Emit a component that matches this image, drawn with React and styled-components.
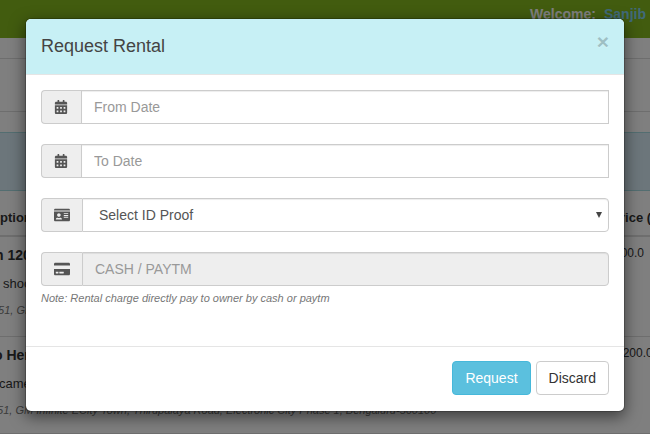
import React from "react";
import styled, { createGlobalStyle } from "styled-components";
import { FaCalendarAlt, FaIdCard, FaCreditCard } from "react-icons/fa";

const GlobalStyle = createGlobalStyle`
  *, *::before, *::after { box-sizing: border-box; }
  body {
    margin: 0;
    overflow: hidden;
    font: 14px/20px "Liberation Sans", Arial, sans-serif;
    color: #333;
  }
`;

const Screen = styled.div`
  position: relative;
  width: 650px;
  height: 434px;
  overflow: hidden;
  background: #fff;
`;

const Page = styled.div`
  display: flex;
  flex-direction: column;
  white-space: nowrap;
`;

const TopBar = styled.header`
  display: flex;
  justify-content: flex-end;
  gap: 8px;
  height: 38px;
  padding: 4px 4px 0 0;
  background: #84b81e;
  color: #fff;
  font-weight: bold;
`;

const UserName = styled.span`
  color: #80d4f4;
`;

const NavStrip = styled.div`
  height: 54px;
  margin-top: 20px;
  border: solid #ddd;
  border-width: 1px 0;
`;

const InfoPanel = styled.div`
  height: 59px;
  margin-top: 20px;
  background: #d9edf7;
  border: solid #a6dce2;
  border-width: 1px 0;
`;

const TableRow = styled.div`
  display: grid;
  grid-template-columns: 617px 1fr;
  height: ${(p) => p.$height}px;
  padding-top: ${(p) => p.$top}px;
  border-bottom: ${(p) => p.$line || 1}px solid #ddd;
  font-weight: ${(p) => (p.$head ? "bold" : "normal")};
  font-size: 13px;
`;

const HeadCell = styled.span`
  padding-left: ${(p) => p.$indent || 0}px;
`;

const Product = styled.div`
  display: flex;
  flex-direction: column;
  margin-left: ${(p) => p.$shift}px;
`;

const Name = styled.strong`
  font-size: 14px;
  line-height: 20px;
`;

const Detail = styled.span`
  margin-top: 9px;
  margin-left: ${(p) => p.$indent}px;
  font-size: 13px;
  line-height: 20px;
`;

const Address = styled.em`
  margin-top: 6px;
  margin-left: -3px;
  font-size: 11px;
  color: #777;
`;

const Price = styled.span`
  margin-top: -2px;
  margin-left: ${(p) => p.$shift}px;
  font-size: 12px;
`;

const Backdrop = styled.div`
  position: absolute;
  inset: 0;
  padding: 18px 25px;
  background: rgba(0, 0, 0, 0.5);
`;

const Dialog = styled.section`
  width: 600px;
  height: 394px;
  display: flex;
  flex-direction: column;
  overflow: hidden;
  background: #fff;
  background-clip: padding-box;
  border: 1px solid rgba(0, 0, 0, 0.2);
  border-radius: 6px;
  box-shadow: 0 5px 15px rgba(0, 0, 0, 0.5);
`;

const DialogHeader = styled.header`
  display: flex;
  justify-content: space-between;
  height: 56px;
  padding: 15px;
  background: #c7f0f5;
  border-bottom: 1px solid #e5e5e5;
`;

const Title = styled.h4`
  margin: 0;
  font-size: 18px;
  font-weight: 400;
  line-height: 25px;
  color: #444;
`;

const Close = styled.button`
  align-self: flex-start;
  margin: -3px 0 0;
  padding: 0;
  border: 0;
  background: none;
  font: bold 21px/21px "Liberation Sans", Arial, sans-serif;
  color: #000;
  opacity: 0.2;
  text-shadow: 0 1px 0 #fff;
`;

const DialogBody = styled.div`
  flex: 1;
  padding: 15px;
`;

const Field = styled.div`
  display: flex;
  height: 34px;
  margin-bottom: ${(p) => (p.$last ? 5 : 20)}px;
`;

const Addon = styled.span`
  display: flex;
  align-items: center;
  justify-content: center;
  width: ${(p) => (p.$wide ? 41 : 40)}px;
  padding-right: ${(p) => (p.$wide ? 0 : 1)}px;
  border: 1px solid #ccc;
  border-right: 0;
  border-radius: 4px 0 0 4px;
  background: #eee;
  color: #555;
  font-size: 14px;
`;

const inputLook = `
  flex: 1;
  min-width: 0;
  margin: 0;
  border: 1px solid #ccc;
  font: 14px/20px "Liberation Sans", Arial, sans-serif;
  box-shadow: inset 0 1px 1px rgba(0, 0, 0, 0.075);
  outline: 0;
`;

const Input = styled.input`
  ${inputLook}
  padding: 6px 12px;
  border-radius: ${(p) => (p.disabled ? "0 4px 4px 0" : "0")};
  background: ${(p) => (p.disabled ? "#eee" : "#fff")};
  &::placeholder {
    color: #999;
    opacity: 1;
  }
`;

const SelectBox = styled.div`
  ${inputLook}
  display: flex;
  align-items: center;
  justify-content: space-between;
  padding: 0 6px 0 16px;
  border-radius: 0 4px 4px 0;
  background: #fff;
  color: #555;
`;

const Arrow = styled.svg`
  display: block;
  width: 6px;
  height: 6px;
  fill: #444;
`;

const Note = styled.em`
  display: block;
  font-size: 11px;
  line-height: 15px;
  color: #777;
`;

const DialogFooter = styled.footer`
  display: flex;
  justify-content: flex-end;
  gap: 5px;
  height: 65px;
  padding: 14px 15px 15px;
  border-top: 1px solid #e5e5e5;
`;

const Button = styled.button`
  height: 34px;
  padding: 6px 12px;
  border: 1px solid ${(p) => (p.$primary ? "#46b8da" : "#ccc")};
  border-radius: 4px;
  background: ${(p) => (p.$primary ? "#5bc0de" : "#fff")};
  color: ${(p) => (p.$primary ? "#fff" : "#333")};
  font: 14px/20px "Liberation Sans", Arial, sans-serif;
`;

export default function App() {
  return (
    <Screen>
      <GlobalStyle />
      <Page>
        <TopBar>
          <span>Welcome:</span>
          <UserName>Sanjib</UserName>
        </TopBar>
        <NavStrip />
        <InfoPanel />
        <TableRow $head $height={46} $top={17} $line={2}>
          <HeadCell>ption</HeadCell>
          <HeadCell $indent={3}>rice (</HeadCell>
        </TableRow>
        <TableRow $height={100} $top={8}>
          <Product $shift={-5}>
            <Name>n 1200D</Name>
            <Detail $indent={8}>shoot</Detail>
            <Address>551, GM Infinite ECity Town</Address>
          </Product>
          <Price $shift={-3}>500.0</Price>
        </TableRow>
        <TableRow $height={97} $top={8}>
          <Product $shift={-6}>
            <Name>o Hero</Name>
            <Detail $indent={5}>camera</Detail>
            <Address>
              551, GM Infinite ECity Town, Thirupalaya Road, Electronic City
              Phase 1, Bengaluru-560100
            </Address>
          </Product>
          <Price $shift={-1}>1200.0</Price>
        </TableRow>
      </Page>
      <Backdrop>
        <Dialog role="dialog">
          <DialogHeader>
            <Title>Request Rental</Title>
            <Close aria-label="Close">×</Close>
          </DialogHeader>
          <DialogBody>
            <Field>
              <Addon><FaCalendarAlt /></Addon>
              <Input placeholder="From Date" />
            </Field>
            <Field>
              <Addon><FaCalendarAlt /></Addon>
              <Input placeholder="To Date" />
            </Field>
            <Field>
              <Addon $wide><FaIdCard size={16} /></Addon>
              <SelectBox role="combobox">
                Select ID Proof
                <Arrow viewBox="0 0 6 6"><path d="M0 0h6L3 6z" /></Arrow>
              </SelectBox>
            </Field>
            <Field $last>
              <Addon $wide><FaCreditCard size={16} /></Addon>
              <Input disabled placeholder="CASH / PAYTM" />
            </Field>
            <Note>Note: Rental charge directly pay to owner by cash or paytm</Note>
          </DialogBody>
          <DialogFooter>
            <Button $primary>Request</Button>
            <Button>Discard</Button>
          </DialogFooter>
        </Dialog>
      </Backdrop>
    </Screen>
  );
}
